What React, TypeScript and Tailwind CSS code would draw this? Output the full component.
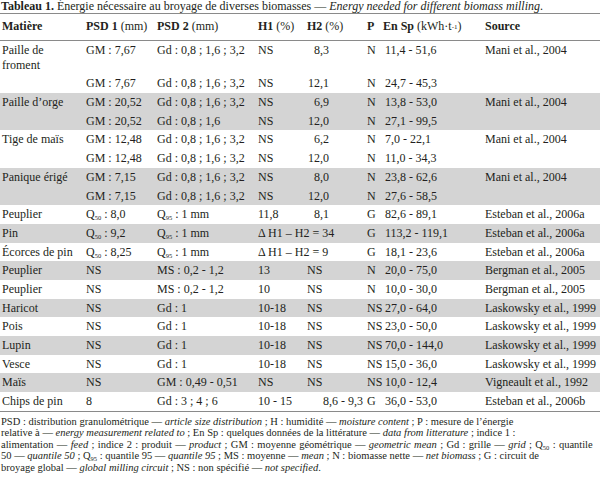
import React from 'react';

type Cell = { c: React.ReactNode; span?: number; cls?: string };
type Row = { gray: boolean; tall?: boolean; cells: (Cell | React.ReactNode)[] };

const Q = ({ n }: { n: string }) => (
  <>
    Q<sub className="text-[6.5px] leading-none align-baseline relative top-[2px]">{n}</sub>
  </>
);

const num = 'text-right pr-[38px]';
const gd3 = 'Gd : 0,8 ; 1,6 ; 3,2';

const rows: Row[] = [
  { gray: false, tall: true, cells: ['Paille de froment', 'GM : 7,67', gd3, 'NS', { c: '8,3', cls: num }, 'N', '11,4 - 51,6', 'Mani et al., 2004'] },
  { gray: false, cells: ['', 'GM : 7,67', gd3, 'NS', { c: '12,1', cls: num }, 'N', '24,7 - 45,3', ''] },
  { gray: true, cells: ['Paille d\u2019orge', 'GM : 20,52', gd3, 'NS', { c: '6,9', cls: num }, 'N', '13,8 - 53,0', 'Mani et al., 2004'] },
  { gray: true, cells: ['', 'GM : 20,52', 'Gd : 0,8 ; 1,6', 'NS', { c: '12,0', cls: num }, 'N', '27,1 - 99,5', ''] },
  { gray: false, cells: ['Tige de maïs', 'GM : 12,48', gd3, 'NS', { c: '6,2', cls: num }, 'N', '7,0 - 22,1', 'Mani et al., 2004'] },
  { gray: false, cells: ['', 'GM : 12,48', gd3, 'NS', { c: '12,0', cls: num }, 'N', '11,0 - 34,3', ''] },
  { gray: true, cells: ['Panique érigé', 'GM : 7,15', gd3, 'NS', { c: '8,0', cls: num }, 'N', '23,8 - 62,6', 'Mani et al., 2004'] },
  { gray: true, cells: ['', 'GM : 7,15', gd3, 'NS', { c: '12,0', cls: num }, 'N', '27,6 - 58,5', ''] },
  { gray: false, cells: ['Peuplier', { c: <><Q n="50" /> : 8,0</> }, { c: <><Q n="95" /> : 1 mm</> }, '11,8', { c: '8,1', cls: num }, 'G', '82,6 - 89,1', 'Esteban et al., 2006a'] },
  { gray: true, cells: ['Pin', { c: <><Q n="50" /> : 9,2</> }, { c: <><Q n="95" /> : 1 mm</> }, { c: '\u0394 H1 \u2013 H2 = 34', span: 2 }, 'G', '113,2 - 119,1', 'Esteban et al., 2006a'] },
  { gray: false, cells: ['Écorces de pin', { c: <><Q n="50" /> : 8,25</> }, { c: <><Q n="95" /> : 1 mm</> }, { c: '\u0394 H1 \u2013 H2 = 9', span: 2 }, 'G', '18,1 - 23,6', 'Esteban et al., 2006a'] },
  { gray: true, cells: ['Peuplier', 'NS', 'MS : 0,2 - 1,2', '13', 'NS', 'N', '20,0 - 75,0', 'Bergman et al., 2005'] },
  { gray: false, cells: ['Peuplier', 'NS', 'MS : 0,2 - 1,2', '10', 'NS', 'N', '10,0 - 30,0', 'Bergman et al., 2005'] },
  { gray: true, cells: ['Haricot', 'NS', 'Gd : 1', '10-18', 'NS', 'NS', '27,0 - 64,0', 'Laskowsky et al., 1999'] },
  { gray: false, cells: ['Pois', 'NS', 'Gd : 1', '10-18', 'NS', 'NS', '23,0 - 50,0', 'Laskowsky et al., 1999'] },
  { gray: true, cells: ['Lupin', 'NS', 'Gd : 1', '10-18', 'NS', 'NS', '70,0 - 144,0', 'Laskowsky et al., 1999'] },
  { gray: false, cells: ['Vesce', 'NS', 'Gd : 1', '10-18', 'NS', 'NS', '15,0 - 36,0', 'Laskowsky et al., 1999'] },
  { gray: true, cells: ['Maïs', 'NS', 'GM : 0,49 - 0,51', 'NS', 'NS', 'NS', '10,0 - 12,4', 'Vigneault et al., 1992'] },
  { gray: false, cells: ['Chips de pin', '8', 'Gd : 3 ; 4 ; 6', '10 - 15', { c: '8,6 - 9,3', cls: 'text-right pr-[4px]' }, 'G', '36,0 - 53,0', 'Esteban et al., 2006b'] },
];

const grid = 'grid grid-cols-[86px_71px_101px_49px_60px_18px_100px_1fr] items-start';

const isCell = (x: unknown): x is Cell =>
  typeof x === 'object' && x !== null && 'c' in (x as object);

const App = () => {
  return (
    <div
      className="w-[600px] h-[477px] overflow-hidden bg-white text-[#231f20] text-[12px]"
      style={{ fontFamily: '"Liberation Serif", "Times New Roman", serif' }}
    >
      <div className="leading-[13px] h-[13px] pl-[1px] whitespace-nowrap border-b border-[#8a8a8a] box-content">
        <b>Tableau 1.</b> Énergie nécessaire au broyage de diverses biomasses — <i>Energy needed for different biomass milling</i>.
      </div>

      <div className={`${grid} h-[21px] pt-[5px] leading-[15px] border-b border-[#8a8a8a] box-content whitespace-nowrap`}>
        <div className="pl-[2px]"><b>Matière</b></div>
        <div><b>PSD 1</b> (mm)</div>
        <div><b>PSD 2</b> (mm)</div>
        <div><b>H1</b> (%)</div>
        <div><b>H2</b> (%)</div>
        <div><b>P</b></div>
        <div className="-ml-[2px]">
          <b>En Sp</b> (kWh·t<sup className="text-[7px] relative -top-[1px]">-1</sup>)
        </div>
        <div><b>Source</b></div>
      </div>

      <div>
        {rows.map((r, i) => (
          <div key={i} className={`${grid} ${r.gray ? 'bg-[#d4d4d4]' : 'bg-white'} ${r.tall ? 'h-[33.4px]' : 'h-[18.7px]'} leading-[14.7px]`}>
            {r.cells.map((cell, j) => {
              const c = isCell(cell) ? cell : { c: cell as React.ReactNode };
              return (
                <div
                  key={j}
                  className={`py-[2px] ${j === 0 ? 'pl-[2px] pr-[4px]' : 'whitespace-nowrap'} ${c.span === 2 ? 'col-span-2' : ''} ${c.cls ?? ''}`}
                >
                  {c.c}
                </div>
              );
            })}
          </div>
        ))}
      </div>

      <div className="border-t border-[#8a8a8a] pt-[4px] text-[10.5px] leading-[11.5px] pl-[1px] whitespace-nowrap">
        PSD : distribution granulométrique — <i>article size distribution</i> ; H : humidité — <i>moisture content</i> ; P : mesure de l’énergie
        <br />
        relative à — <i>energy measurement related to</i> ; En Sp : quelques données de la littérature — <i>data from litterature</i> ; indice 1 :
        <br />
        <span className="[word-spacing:0.7px]">
          alimentation — <i>feed</i> ; indice 2 : produit — <i>product</i> ; GM : moyenne géométrique — <i>geometric mean</i> ; Gd : grille — <i>grid</i> ; <Q n="50" /> : quantile
        </span>
        <br />
        50 — <i>quantile 50</i> ; <Q n="95" /> : quantile 95 — <i>quantile 95</i> ; MS : moyenne — <i>mean</i> ; N : biomasse nette — <i>net biomass</i> ; G : circuit de
        <br />
        broyage global — <i>global milling circuit</i> ; NS : non spécifié — <i>not specified</i>.
      </div>
    </div>
  );
};

export default App;
